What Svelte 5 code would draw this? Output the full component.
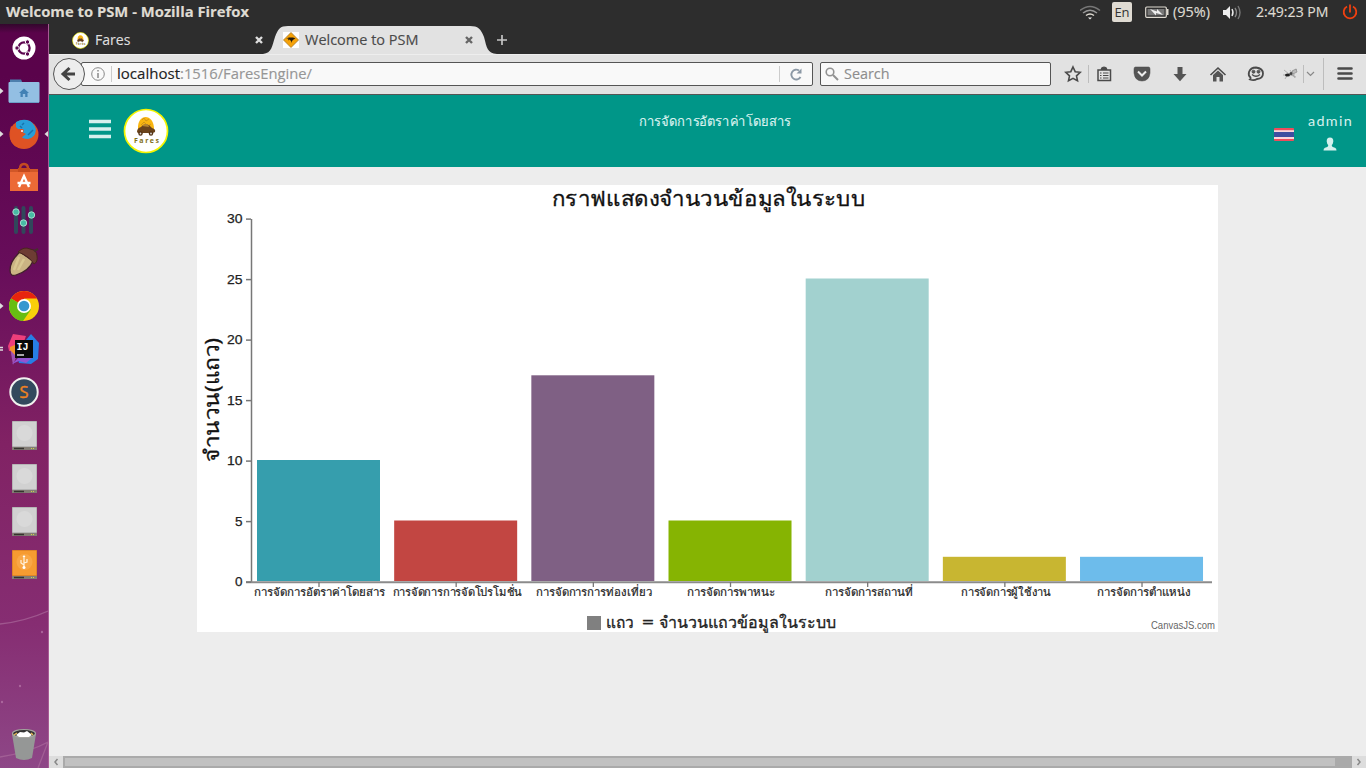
<script>
  const bars = [
    { label: 'การจัดการอัตราค่าโดยสาร', value: 10, color: '#369ead', x: 57, w: 131 },
    { label: 'การจัดการการจัดโปรโมชั่น', value: 5, color: '#c24642', x: 195.5, w: 129.5 },
    { label: 'การจัดการการท่องเที่ยว', value: 17, color: '#7f6084', x: 339, w: 115.5 },
    { label: 'การจัดการพาหนะ', value: 5, color: '#86b402', x: 490, w: 88.5 },
    { label: 'การจัดการสถานที่', value: 25, color: '#a2d1cf', x: 628, w: 88 },
    { label: 'การจัดการผู้ใช้งาน', value: 2, color: '#c8b631', x: 764, w: 90 },
    { label: 'การจัดการตำแหน่ง', value: 2, color: '#6dbceb', x: 900, w: 93.5 }
  ];
  const ticks = [0, 5, 10, 15, 20, 25, 30];
  const yAt = (v) => 397 - v * 12.1;
  const apps = ['dash', 'files', 'firefox', 'store', 'mixer', 'acorn', 'chrome', 'idea', 'sublime', 'disk', 'disk', 'disk', 'usb'];
</script>

{#snippet fit(text, width, size, color, weight)}
  <svg class="fit" {width} height="24" viewBox="0 0 {width} 24">
    <text x="0" y="17" font-size={size} fill={color} stroke={color} stroke-width=".15" font-weight={weight} textLength={width} lengthAdjust="spacingAndGlyphs">{text}</text>
  </svg>
{/snippet}

{#snippet logo(size)}
  <svg width={size} height={size} viewBox="0 0 46 46">
    <circle cx="23" cy="23" r="21.5" fill="#fff" stroke="#f4f400" stroke-width="1.7" />
    <path d="M15 21C14 5 31 5 31 21Z" fill="#f9b511" />
    <path d="m19 12 2-2 2 3 3-2M18 17l3-3 4 4 3-2" stroke="#c08a18" stroke-width=".7" fill="none" />
    <path d="M14 24q0-4 4-5l2-2h6l3 3q4 1 3 4l-2 1H15Z" fill="#6a431c" />
    <path d="M19 18l2-2h4l1 3Z" fill="#b4832e" />
    <circle cx="17.500" cy="25.500" r="2.200" fill="#523112" /><circle cx="28" cy="25.500" r="2.200" fill="#523112" />
    <circle cx="17.500" cy="25.500" r=".9" fill="#ddd" /><circle cx="28" cy="25.500" r=".9" fill="#ddd" />
    <text x="11" y="35" font-size="7" font-weight="bold" fill="#827018" textLength="25">Fares</text>
  </svg>
{/snippet}

{#snippet appIcon(kind)}
  <svg width="48" height="43" viewBox="0 0 48 43">
    {#if kind === 'dash'}
      <circle cx="24" cy="21" r="11.5" fill="#fff" />
      <circle cx="24" cy="21" r="5.6" fill="none" stroke="#5c0750" stroke-width="2.3" />
      <g fill="#5c0750" stroke="#fff" stroke-width="1"><circle cx="17" cy="21" r="2.2" /><circle cx="27.5" cy="15" r="2.2" /><circle cx="27.5" cy="27" r="2.2" /></g>
    {:else if kind === 'files'}
      <path d="M10 9.500h11l1 2v5H10Z" fill="#4d7fad" />
      <rect x="8.5" y="12" width="31" height="20.500" rx="1" fill="#93bfe3" />
      <path d="M9 32.500h30" stroke="#6d9fc9" />
      <path d="m19 23 5-4.5 5 4.5h-1.5v4h-2.3v-3h-2.4v3h-2.3v-4Z" fill="#4281b5" />
    {:else if kind === 'firefox'}
      <circle cx="24" cy="21.500" r="14.500" fill="#dc5424" />
      <path d="M16 9q7-4 14-1 6 4 6 11 0 8-6 9-5 1-9-3l5-4-6-3-4-4Z" fill="#289ed8" />
      <path d="m11 13 4 3 8 0q2 2-1 4l-2 2q2 4 8 4 7-1 8-9 4 14-10 18-14 1-16-10 0-8 1-12Z" fill="#df5224" />
      <path d="M20 13l2 2M22 12l2-2M28 22l5-5" stroke="#1872ad" stroke-width="1.500" />
      <circle cx="22" cy="18" r="1" fill="#fff" />
    {:else if kind === 'store'}
      <path d="M20 13q0-5 4-5t4 5" stroke="#c44b20" stroke-width="2.500" fill="none" />
      <path d="M10 13h28v22H10Z" fill="#ec6a36" /><path d="M10 13h28v3H10Z" fill="#d15727" /><path d="M18 12h12v4H18Z" fill="#c54a1d" />
      <path d="m19 31 5-11 5 11M17.500 27h13" stroke="#fff" stroke-width="2.3" fill="none" />
    {:else if kind === 'mixer'}
      <g stroke="#31475b" stroke-width="4" stroke-linecap="round"><path d="M16 9v24M23.500 9v24M31 9v24" /></g>
      <g fill="#48bba4" stroke="#a6dacd"><circle cx="16" cy="13" r="3.200" /><circle cx="23.500" cy="24" r="3.200" /><circle cx="31.500" cy="16" r="3.200" /></g>
    {:else if kind === 'acorn'}
      <path d="M20 10q-10 9-10 18 0 7 6 5 13-4 17-14Z" fill="#cab483" stroke="#42202d" stroke-width="1.300" />
      <path d="m19 15-5 13M24 17l-6 11" stroke="#d9c892" stroke-width="2.500" />
      <path d="M18 10q6-6 12-3 7 1 7 7 1 6-3 8-5-8-16-12Z" fill="#6d3c33" stroke="#49251f" />
      <path d="m34 9 4-2" stroke="#45312c" stroke-width="2" />
    {:else if kind === 'chrome'}
      <circle cx="24" cy="21" r="15" fill="#f9cf0a" />
      <path d="M24 21 11 13.500A15 15 0 0 1 37 13.500H24Z" fill="#e8240e" />
      <path d="M24 21 11 13.500a15 15 0 0 0 12 22.500L31 24.500Z" fill="#67bd13" />
      <circle cx="24" cy="21" r="7" fill="#fff" /><circle cx="24" cy="21" r="5.300" fill="#3698cf" />
    {:else if kind === 'idea'}
      <path d="m13 6 13 2-5 14-12 1-1-5Z" fill="#ee3f7b" /><path d="m10 19 7 8-4 10Z" fill="#a052b3" /><path d="m10 19 7-3-1 12-6-6Z" fill="#f3912a" />
      <path d="m31 6 8 9-1 16-7 5-12-1-3-11Z" fill="#277ee5" /><path d="m12 36 6-6 14 0-6 5-7-2Z" fill="#9254d2" />
      <rect x="15" y="12" width="18" height="18" fill="#080808" />
      <text x="16.500" y="22" fill="#fff" font-size="10" font-family="Liberation Mono" font-weight="bold">IJ</text><path d="M17 27h7" stroke="#ddd" stroke-width="1.500" />
    {:else if kind === 'sublime'}
      <circle cx="24" cy="21" r="13.700" fill="#33495d" stroke="#f1f1ef" stroke-width="2" />
      <text x="24" y="27" fill="#f08321" stroke="#f08321" stroke-width=".4" font-size="16.500" text-anchor="middle">S</text>
    {:else}
      <path d="M12.500 7.500h24v25h-24Z" fill={kind === 'usb' ? '#f69b31' : '#d1d1d1'} stroke={kind === 'usb' ? '#df8427' : '#b6b6b6'} />
      <circle cx="24.500" cy="19" r="8" fill={kind === 'usb' ? '#f9a746' : '#d9d9d9'} />
      <path d="M12 33h25v3H12Z" fill="#837d75" /><path d="M14 34.500h10" stroke="#35332f" stroke-width="1.500" /><path d="M31 34.500h4" stroke="#d4d14a" stroke-width="1.200" stroke-dasharray="1 1" />
      {#if kind === 'usb'}<path d="M24 13v12M24 22l-3-2v-3M24 20l3-1v-3" stroke="#fff3df" stroke-width="1.200" fill="none" /><circle cx="24" cy="24.500" r="1.500" fill="#fff" /><path d="m22.500 14 1.500-2 1.500 2" fill="#fff" />{/if}
    {/if}
    {#if kind === 'files' || kind === 'firefox' || kind === 'chrome'}<path d="M0 18 3.500 21 0 24Z" fill="#ddd" />{/if}
    {#if kind === 'firefox'}<path d="m48 18-3.500 3 3.500 3Z" fill="#ddd" />{/if}
    {#if kind === 'idea'}<path d="M0 19.500h3M0 22h3" stroke="#ddd" stroke-width="1.600" />{/if}
  </svg>
{/snippet}

<div class="desktop">
  <header class="panel">
    {@render fit('Welcome to PSM - Mozilla Firefox', 243, 14.5, '#dfdbd2', 700)}
    <div class="indicators">
      <svg width="22" height="24" viewBox="0 0 22 24" fill="none" stroke-width="1.500"><path d="M0 10.500q10-8 20 0" stroke="#777" /><path d="M3 13q7-5.500 14 0" stroke="#999" /><path d="M6 15.500q4-3 8 0" stroke="#dfdbd2" /><path d="m8 17.500 2 2 2-2Z" fill="#eee" /></svg>
      <span class="lang">En</span>
      <svg class="battery" width="24" height="24" viewBox="0 0 24 24"><rect x=".7" y="7" width="20.600" height="10.300" rx="1" fill="none" stroke="#dfdbd2" stroke-width="1.200" /><rect x="2.500" y="9" width="17" height="6.400" fill="#777" /><path d="M22 9v6h1.500V9Z" fill="#dfdbd2" /><path d="m5 9 7 2.500V9l6 6-7-2v2.500Z" fill="#eee" /></svg>
      <span class="pct">{@render fit('(95%)', 37, 14, '#dfdbd2', 400)}</span>
      <svg class="volume" width="20" height="24" viewBox="0 0 20 24" fill="none" stroke-width="1.400"><path d="M1 10h3l4-4v13l-4-4H1Z" fill="#eee" /><path d="M10 9q2 3.500 0 7" stroke="#eee" /><path d="M13 8q3 4.500 0 9" stroke="#888" /><path d="M16 6q4 6.500 0 13" stroke="#777" /></svg>
      <span class="clock">{@render fit('2:49:23 PM', 72.5, 14.2, '#dfdbd2', 400)}</span>
      <svg class="power" width="16" height="24" viewBox="0 0 16 24" fill="none" stroke="#f04010" stroke-width="1.800"><path d="M5 6.500a6.300 6.300 0 1 0 6 0M8 4.500v8" /></svg>
    </div>
  </header>
  <div class="body">
    <aside>
      <svg class="stars" width="48" height="200" viewBox="0 0 48 200" fill="none" stroke="#ad6d9e" opacity=".65"><path d="M0 56Q26 53 48 43M0 189Q30 184 48 174M38 200l10-26" stroke-width="1.300" /><g fill="#bd7eae" stroke="none"><circle cx="42" cy="64" r="1.200" /><circle cx="20" cy="118" r="1.200" /><circle cx="2" cy="134" r="1.200" /></g></svg>
      {#each apps as app}{@render appIcon(app)}{/each}
      <svg class="trash" width="48" height="43" viewBox="0 0 48 43"><path d="M12 10 16 34q8 4 16 0l4-24Z" fill="#959796" /><ellipse cx="24" cy="9.500" rx="11.500" ry="4" fill="#333" stroke="#a5a5a0" stroke-width="1.200" /><path d="M16 11l4-3 4 .5 3-1.500 5 4-3 2H19Z" fill="#fff" /><path d="M14 11l3-2M31 9l2 2" stroke="#e4b555" stroke-width="1.500" /></svg>
    </aside>
    <main>
      <div class="tabs">
        <div class="tab first">
          {@render logo(17)}
          <span class="t1">{@render fit('Fares', 35.5, 15, '#dfdfdf', 400)}</span>
          <svg class="x" width="10" height="10" viewBox="0 0 10 10"><path d="m2 2 6 6M8 2 2 8" stroke="#ddd" stroke-width="2.400" /></svg>
        </div>
        <div class="tab active">
          <svg class="shape" width="234" height="30" viewBox="0 0 234 30"><path d="M-2 30C7 29 7 22 10 13 13 5 15 2 23 2H205C213 2 216 5 219 13 222 24 222 29 232 30Z" fill="#e2e2e2" /></svg>
          <svg class="roo" width="16" height="16" viewBox="0 0 16 16"><path d="M0 0h16v16H0Z" fill="#fff" /><path d="M8 .5 15.500 8 8 15.500.500 8Z" fill="#f6a208" stroke="#a77724" stroke-width=".8" /><path d="m3 6.500 3-1 4 0 2.500 1-2 1-1.500 1.500-.500 2-.5-2-1.500-1.500-1.500 1 .5-2Z" fill="#211a10" /></svg>
          <span class="t2">{@render fit('Welcome to PSM', 113.5, 15, '#4a4a4a', 400)}</span>
          <svg class="x" width="10" height="10" viewBox="0 0 10 10"><path d="m2 2 6 6M8 2 2 8" stroke="#666" stroke-width="2.400" /></svg>
        </div>
        <svg class="plus" width="12" height="12" viewBox="0 0 12 12"><path d="M6 1v10M1 6h10" stroke="#c5c5c5" stroke-width="1.700" /></svg>
      </div>
      <div class="toolbar">
        <svg class="back" width="34" height="34" viewBox="0 0 34 34"><circle cx="17" cy="17" r="15.500" fill="#ededed" stroke="#555" /><path d="m17.500 11-6.500 6 6.500 6M12 17h11" fill="none" stroke="#444" stroke-width="3" /></svg>
        <div class="url">
          <svg width="14" height="14" viewBox="0 0 14 14"><circle cx="7" cy="7" r="6.300" fill="none" stroke="#888" /><path d="M7 6v5M7 3v1.500" stroke="#888" stroke-width="1.500" /></svg>
          <i></i>
          {@render fit('localhost', 63, 15, '#222', 400)}{@render fit(':1516/FaresEngine/', 132, 15, '#969696', 400)}
          <b></b>
          <svg class="reload" width="14" height="14" viewBox="0 0 14 14"><path d="M11.500 10A4.900 4.900 0 1 1 10 3.500" fill="none" stroke="#8b98a5" stroke-width="1.900" /><path d="M12.500 1.500v5H7.500Z" fill="#8b98a5" /></svg>
        </div>
        <div class="search">
          <svg width="14" height="14" viewBox="0 0 14 14"><circle cx="5" cy="5" r="3.800" fill="none" stroke="#929292" stroke-width="1.600" /><path d="m8 8 5 5" stroke="#929292" stroke-width="2" /></svg>
          {@render fit('Search', 45.5, 15, '#8d8d8d', 400)}
        </div>
        <svg class="tools" width="315" height="41" viewBox="1051 54 315 41" fill="none" stroke="#4a4a4a" stroke-width="1.600">
          <path d="m1073 67 2.200 4.700 5 .6-3.700 3.500 1 5-4.500-2.500-4.500 2.500 1-5-3.700-3.500 5-.6Z" />
          <path d="M1088.500 65v18M1303.500 65v18M1323.500 58v32" stroke="#bdbdbd" stroke-width="1" />
          <path d="M1098 70h12.500v10.500H1098Z" stroke-width="1.500" /><path d="M1101 69.500q0-2.500 3-2.500t3 2.500Z" fill="#4a4a4a" stroke="#4a4a4a" stroke-width="1" /><path d="M1100 73h1.500m1.500 0h5.500M1100 75.500h1.500m1.500 0h5.500M1100 78h1.500m1.500 0h5.500" stroke-width="1.100" />
          <path d="M1135.500 67h13q1.500 0 1.500 2v4q-1 8-8 8t-8-8v-4q0-2 1.500-2Z" fill="#555" stroke="#444" stroke-width=".5" /><path d="m1138 71.500 4 4 4-4" stroke="#eee" stroke-width="2" />
          <path d="M1177.500 67h5v7h4l-6.500 7.300-6.500-7.300h4Z" fill="#555" stroke="none" />
          <path d="m1210.500 75 7.500-7 7.500 7" stroke-width="1.600" /><path d="m1218 70.500 5 4.500v6.500h-3.500V77h-3v4.500h-3.500V75Z" fill="#555" stroke="none" />
          <path d="M1250 79.500q1-1 .5-2-2.500-2-1.500-5.500 1.500-4.500 7-4.500 7 1 7 6 0 5-6 5.500-3 2-7 .5Z" fill="#e2e2e2" stroke-width="1.800" /><circle cx="1253.500" cy="71.700" r="1.500" fill="#555" stroke-width=".8" /><circle cx="1258.500" cy="71.700" r="1.500" fill="#555" stroke-width=".8" /><path d="M1252 74.500q4 3.500 8 0" stroke-width="1.300" />
          <path d="m1284 70 5 4 8-5M1285 79l3-5 8 3M1290 70l5 8M1283 75h12" stroke="#999" stroke-width=".7" /><ellipse cx="1287.500" cy="75" rx="2.500" ry="1.600" fill="#222" stroke="none" /><circle cx="1291" cy="73.500" r="1.500" fill="#444" stroke="none" /><path d="m1292 71 4-2 1 3-4 2Z" fill="#bbb" stroke="#888" stroke-width=".7" />
          <path d="m1307 72 3.500 3.500 3.500-3.500" stroke="#888" stroke-width="1.200" />
          <path d="M1338.500 68.500h13M1338.500 73.500h13M1338.500 78.500h13" stroke-width="2.600" stroke-linecap="round" />
        </svg>
      </div>
      <nav>
        <svg class="menu" width="22" height="20" viewBox="0 0 22 20"><path d="M0 2.500h22M0 10h22M0 17.500h22" stroke="#d5f0ed" stroke-width="3.700" /></svg>
        <div class="brand">{@render logo(46)}</div>
        <div class="heading">{@render fit('การจัดการอัตราค่าโดยสาร', 152, 13.5, '#d9f1ee', 400)}</div>
        <svg class="flag" width="20" height="13" viewBox="0 0 20 13"><rect width="20" height="13" rx="1" fill="#ed4c5c" /><path d="M0 2.200h20v8.800H0Z" fill="#f8d7dc" /><path d="M0 4h20v5H0Z" fill="#3e4fa0" /></svg>
        <div class="user">
          <svg width="44" height="16" viewBox="0 0 44 16"><text transform="scale(1.15 1)" x="0" y="12" font-family="Lato" font-size="12.500" fill="#d9f1ee" textLength="38">admin</text></svg>
          <svg width="14" height="14" viewBox="0 0 14 14"><path d="M7 .5Q3.500.500 3.700 4.500 4 7 5.200 8 5.500 10 2 10.800.500 11.500.500 13.500h13q0-2-1.500-2.700Q8.500 10 8.800 8 10 7 10.300 4.500 10.500.500 7 .500Z" fill="#d5f0ed" /></svg>
        </div>
      </nav>
      <section>
        <svg class="chart" width="1021" height="447" viewBox="0 0 1021 447">
          <text x="355" y="21" font-size="21.500" fill="#111" stroke="#111" stroke-width=".3" textLength="313.500" lengthAdjust="spacingAndGlyphs">กราฟแสดงจำนวนข้อมูลในระบบ</text>
          <text transform="translate(21.500 277) rotate(-90)" font-size="20" fill="#111" stroke="#111" stroke-width=".3" textLength="124" lengthAdjust="spacingAndGlyphs">จำนวน(แถว)</text>
          <path d="M54.500 34v363" stroke="#777" stroke-width="1.500" />
          <path d="M49 397.300h966" stroke="#8b8b8b" stroke-width="2" />
          {#each ticks as t}
            <path d="M49 {yAt(t) + .1}h5" stroke="#777" stroke-width="1.500" />
            <text class="num" x="45.500" y={yAt(t) + 4} text-anchor="end" textLength={t < 10 ? 7.5 : 15.5} lengthAdjust="spacingAndGlyphs">{t}</text>
          {/each}
          {#each bars as bar, i}
            <rect x={60 + i * 137.170} y={yAt(bar.value) - 1} width="123" height={bar.value * 12.1} fill={bar.color} />
            <path d="M{122 + i * 137.170} 397v5" stroke="#777" stroke-width="1.300" />
            <text x={bar.x} y="410.500" font-size="11.500" fill="#222" stroke="#222" stroke-width=".2" textLength={bar.w} lengthAdjust="spacingAndGlyphs">{bar.label}</text>
          {/each}
          <rect x="390" y="431" width="14" height="14" fill="#808080" />
          <g font-size="16" fill="#222" stroke="#222" stroke-width=".3">
            <text x="409" y="442.500" textLength="28" lengthAdjust="spacingAndGlyphs">แถว</text>
            <text x="445" y="442.500" textLength="12" lengthAdjust="spacingAndGlyphs">=</text>
            <text x="462" y="442.500" textLength="177" lengthAdjust="spacingAndGlyphs">จำนวนแถวข้อมูลในระบบ</text>
          </g>
          <text x="954" y="444" font-family="Liberation Sans" font-size="10" fill="#666" textLength="64" lengthAdjust="spacingAndGlyphs">CanvasJS.com</text>
        </svg>
      </section>
      <div class="scroll">
        <svg width="14" height="12" viewBox="0 0 14 12"><path d="M8.500 3 6 6l2.500 3" fill="none" stroke="#888" stroke-width="1.500" /></svg>
        <div class="track"><div class="thumb"></div></div>
        <svg width="14" height="12" viewBox="0 0 14 12"><path d="M5.500 3 8 6 5.500 9" fill="none" stroke="#888" stroke-width="1.500" /></svg>
      </div>
    </main>
  </div>
</div>

<style>
  :global(body) { margin: 0; overflow: hidden; }
  .desktop { width: 1366px; height: 768px; display: flex; flex-direction: column; font-family: "Open Sans", "Noto Sans", sans-serif; }
  svg { display: block; flex: none; }
  .fit { overflow: visible; }
  .panel { height: 24px; background: #2d2d2d; display: flex; justify-content: space-between; padding-left: 6px; }
  .indicators { display: flex; width: 286px; }
  .lang { background: #dfdbd2; color: #333; font-size: 13px; line-height: 20px; height: 20px; width: 20px; text-align: center; border-radius: 2px; margin: 2px 0 0 10px; }
  .battery { margin-left: 13px; }
  .pct { margin-left: 4px; }
  .volume { margin-left: 12px; }
  .clock { margin-left: 14px; }
  .power { margin-left: 13px; }
  .body { flex: 1; display: flex; min-height: 0; }
  aside { box-sizing: border-box; width: 49px; padding-top: 3px; border-right: 1px solid #a75b94; position: relative; display: flex; flex-direction: column; background: linear-gradient(#32072c 0, #5a034a 9px, #5a034b 50px, #670d5a 240px, #812264 420px, #862d72 600px, #8e4787); }
  aside > svg { position: relative; }
  aside > .stars { position: absolute; bottom: 0; left: 0; }
  aside > .trash { margin-top: auto; margin-bottom: 1px; }
  main { flex: 1; min-width: 0; display: flex; flex-direction: column; }
  .tabs { height: 30px; background: #2d2d2d; display: flex; align-items: center; }
  .tab { display: flex; align-items: center; height: 30px; }
  .first { width: 216px; padding-top: 2px; height: 28px; box-sizing: content-box; }
  .first > :global(svg:first-child) { margin-left: 23px; }
  .t1 { margin: 0 auto 0 6px; }
  .first .x { margin-right: 1px; }
  .active { position: relative; width: 221px; }
  .active > * { position: relative; }
  .active > .shape { position: absolute; left: 0; top: 0; overflow: visible; }
  .roo { margin: 2px 6px 0 18px; }
  .t2 { margin: 2px auto 0 0; }
  .active .x { margin: 2px 12px 0 0; }
  .plus { margin: 2px 0 0 10px; }
  .toolbar { box-sizing: border-box; height: 41px; background: #e2e2e2; border-top: 1px solid #eee; border-bottom: 1px solid #555; display: flex; align-items: center; }
  .back { margin-left: 3px; z-index: 1; }
  .url { box-sizing: border-box; width: 732px; height: 24px; margin: 0 0 0 -5px; border: 1px solid #555; border-radius: 2px; background: #f9f9f9; display: flex; align-items: center; padding-left: 9px; }
  .url i { width: 1px; height: 16px; background: #ccc; margin: 0 5px 0 6px; }
  .url b { width: 1px; height: 16px; background: #ccc; margin: 0 9px 0 auto; }
  .reload { margin-right: 9px; }
  .search { box-sizing: border-box; width: 231px; height: 24px; margin: 0 0 0 7px; border: 1px solid #555; border-radius: 2px; background: #f9f9f9; display: flex; align-items: center; gap: 5px; padding-left: 4px; }
  .back, .url, .search { margin-top: -1px; }
  nav { height: 72px; background: #009688; display: flex; align-items: flex-start; }
  .menu { margin: 24px 0 0 40px; }
  .brand { margin: 13px 0 0 12px; }
  .heading { margin: 14px 0 0 470px; }
  .flag { margin: 33px 0 0 auto; }
  .user { width: 44px; margin: 19px 14px 0 14px; display: flex; flex-direction: column; align-items: center; gap: 7px; }
  section { flex: 1; background: #ededed; padding: 18px 0 0 148px; }
  .chart { background: #fff; font-family: "Noto Sans", sans-serif; overflow: visible; }
  .num { font: 13px "Liberation Sans", sans-serif; fill: #222; stroke: #222; stroke-width: .25; }
  .scroll { height: 12px; display: flex; background: #ddd; }
  .track { flex: 1; background: #aaa; padding: 2px; }
  .thumb { height: 8px; width: 1270px; background: #c1c1c1; }
</style>
